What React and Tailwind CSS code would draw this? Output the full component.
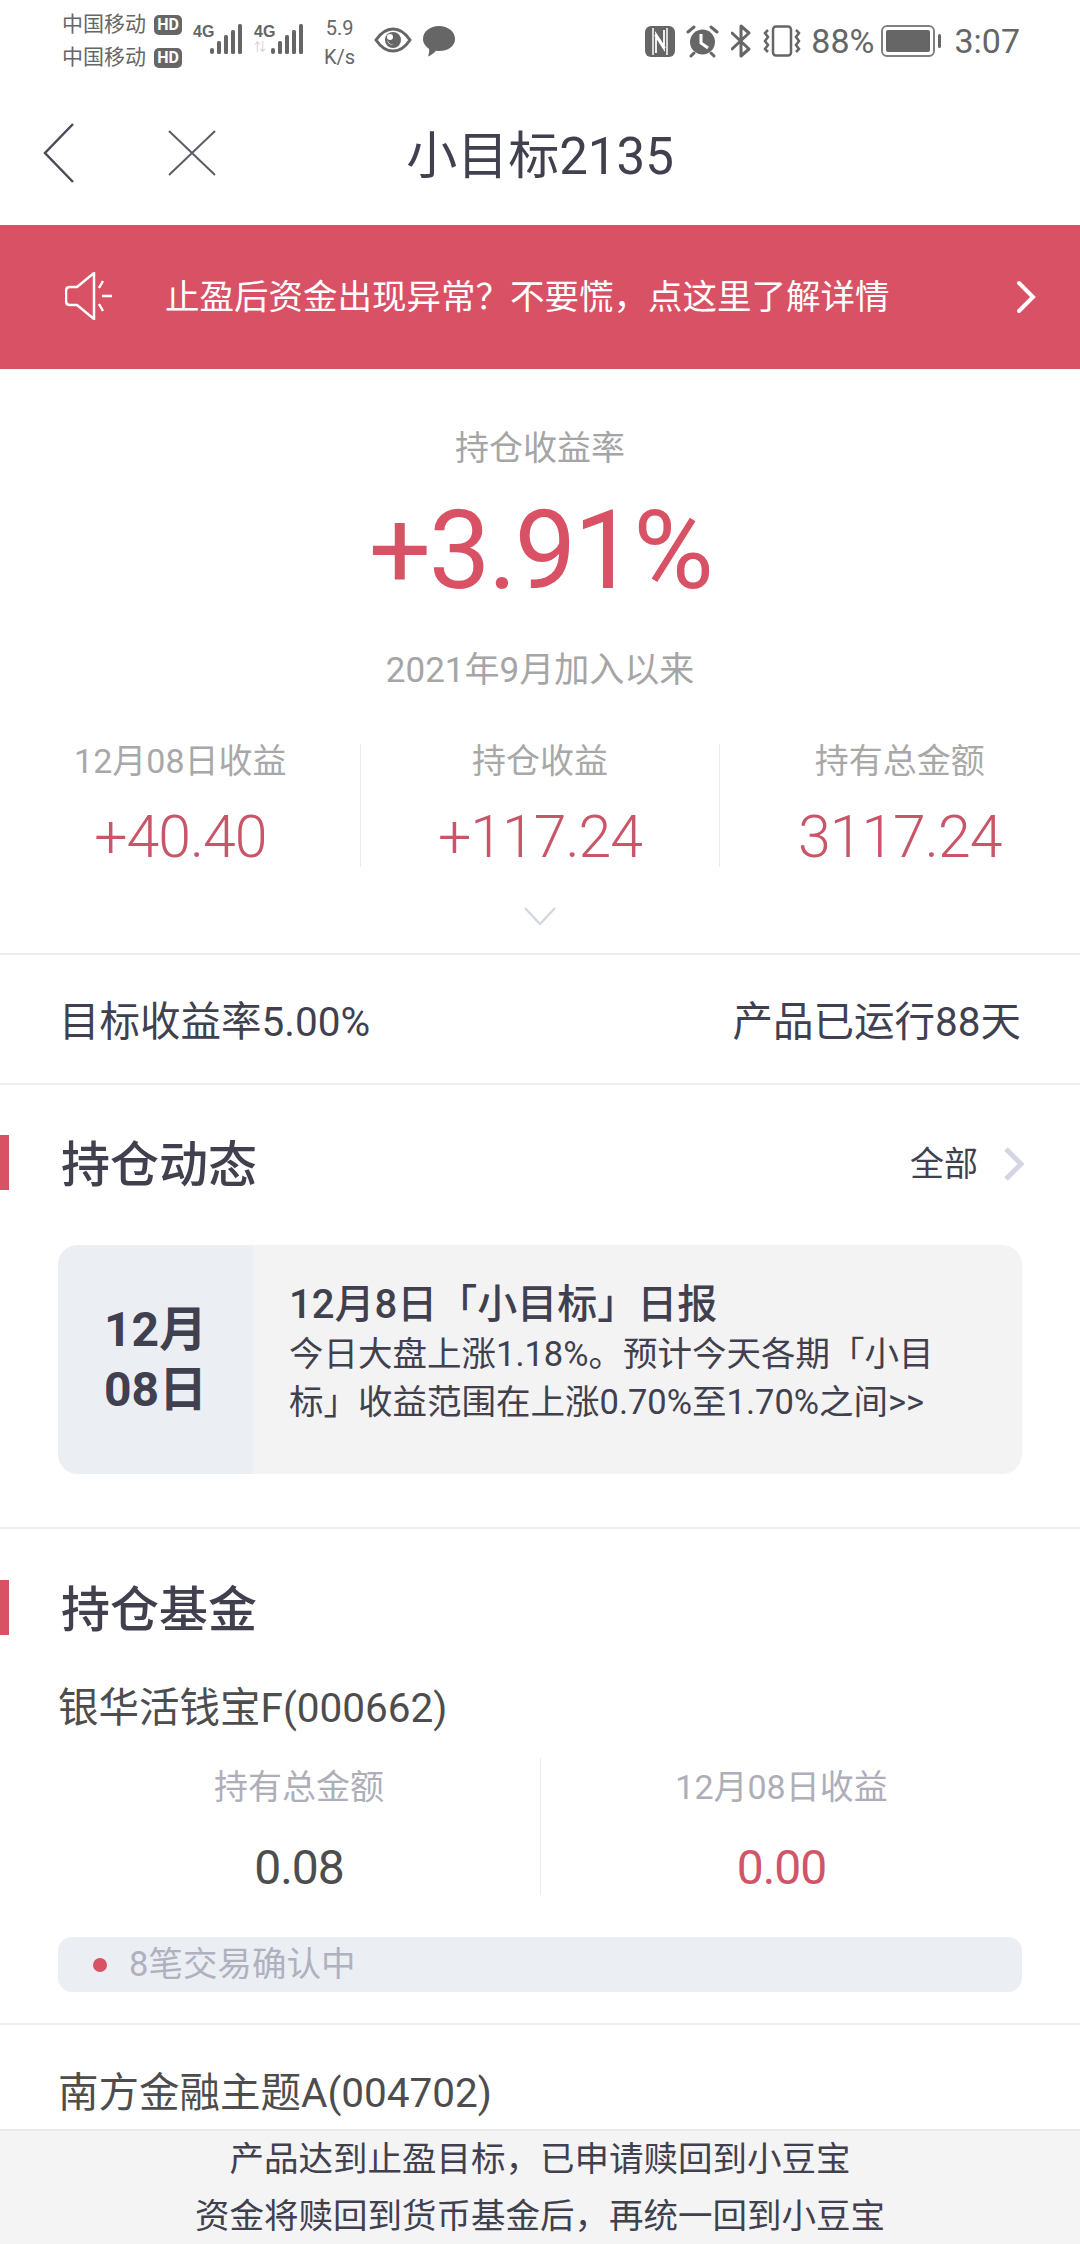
const DARK = 'text-[#40404f]';

// full-width punctuation, written as escapes so it stays exact
const Q = '\uFF1F';
const C = '\uFF0C';

function HdBadge() {
  return (
    <span className="flex h-[20px] w-[28px] items-center justify-center rounded-[5px] bg-[#666666] text-[16px] leading-none font-bold text-white">
      HD
    </span>
  );
}

function Signal({ arrows }) {
  return (
    <div className="flex h-[32px] w-[50px] items-start">
      <div className="flex w-[18px] flex-col">
        <span className="text-[16px] leading-[16px] font-bold text-[#666666] [font-family:'Liberation_Sans_Narrow','Liberation_Sans',sans-serif]">4G</span>
        {arrows && <span className="mt-[2px] text-[12px] leading-[12px] text-[#cccccc]">⇅</span>}
      </div>
      <svg width="33" height="31" viewBox="0 0 33 31" fill="#666666" className="ml-[-1px]">
        <rect x="0" y="24" width="4" height="6" rx="2" />
        <rect x="7" y="17" width="4" height="13" rx="1.5" />
        <rect x="14" y="11" width="4" height="19" rx="1.5" />
        <rect x="21" y="6" width="4" height="24" rx="1.5" />
        <rect x="28" y="0" width="4" height="30" rx="1.5" />
      </svg>
    </div>
  );
}

function StatusBar() {
  return (
    <div className="flex h-[85px] items-start justify-between pt-[8px] pr-[60px] pl-[62px] text-[#666666]">
      <div className="flex items-start">
        <div className="flex flex-col">
          <div className="flex h-[33px] items-center gap-[6px] text-[21px] leading-none"><span className="w-[86px] whitespace-nowrap">中国移动</span><HdBadge /></div>
          <div className="flex h-[33px] items-center gap-[6px] text-[21px] leading-none"><span className="w-[86px] whitespace-nowrap">中国移动</span><HdBadge /></div>
        </div>
        <div className="mt-[16px] ml-[11px] flex gap-[11px]">
          <Signal />
          <Signal arrows />
        </div>
        <div className="mt-[6px] ml-[20px] flex flex-col items-center text-[20px] leading-[29px]">
          <span>5.9</span>
          <span>K/s</span>
        </div>
        <svg width="38" height="26" viewBox="0 0 38 26" className="mt-[19px] ml-[19px]">
          <path d="M2 13 C8 4 14 2 19 2 C24 2 30 4 36 13 C30 22 24 24 19 24 C14 24 8 22 2 13 Z" fill="none" stroke="#666666" strokeWidth="3" />
          <circle cx="19" cy="13" r="8" fill="#666666" />
          <path d="M13 12 A6 6 0 0 0 20 18 A7 7 0 0 1 13 12 Z" fill="#ffffff" />
          <circle cx="16" cy="10" r="3" fill="#ffffff" />
        </svg>
        <svg width="32" height="31" viewBox="0 0 32 31" fill="#666666" className="mt-[18px] ml-[11px]">
          <path d="M16 0 C25 0 32 5.500 32 13 C32 20.500 25 25 16 25 C15 25 14 25 13 24.800 C11 27 8 29.500 5 30.500 C6 28 6.500 25 6 22.800 C2.500 20.500 0 17 0 13 C0 5.500 7 0 16 0 Z" />
        </svg>
      </div>
      <div className="mt-[16px] flex items-center">
        <svg width="30" height="31" viewBox="0 0 30 31" className="mr-[11px]">
          <rect x="0" y="0" width="30" height="31" rx="6" fill="#666666" />
          <path d="M8 2 V29 M22 2 V29" fill="none" stroke="#ffffff" strokeWidth="1.500" />
          <path d="M11 27 V8 L20 22 M19 4 V23 L10 9" fill="none" stroke="#ffffff" strokeWidth="1.800" />
        </svg>
        <svg width="33" height="33" viewBox="0 0 33 33" className="mr-[12px]">
          <circle cx="16.500" cy="17" r="12.500" fill="#666666" />
          <path d="M15 9 V18 L22 23" fill="none" stroke="#ffffff" strokeWidth="3" />
          <path d="M2 7 L8 2 M31 7 L25 2 M5 31 L8 28 M28 31 L25 28" fill="none" stroke="#666666" strokeWidth="3" strokeLinecap="round" />
        </svg>
        <svg width="21" height="34" viewBox="0 0 21 34" className="mr-[11px]">
          <path d="M1 9 L18 25 L10 32 V2 L18 9 L1 25" fill="none" stroke="#666666" strokeWidth="3" strokeLinejoin="round" strokeLinecap="round" />
        </svg>
        <svg width="38" height="32" viewBox="0 0 38 32" fill="none" stroke="#666666" strokeWidth="2.500" className="mr-[10px]">
          <rect x="10" y="1.500" width="18" height="29" rx="3" />
          <path d="M5 5 L2 8 L5 12 L2 16 L5 20 L2 24 L5 27 M33 5 L36 8 L33 12 L36 16 L33 20 L36 24 L33 27" />
        </svg>
        <span className="text-[34px] leading-none">88%</span>
        <div className="ml-[7px] flex items-center">
          <div className="h-[32px] w-[54px] rounded-[6px] border-[2.500px] border-[#808080] p-[3px]">
            <div className="h-full w-full rounded-[2px] bg-[#666666]" />
          </div>
          <div className="ml-[3px] h-[14px] w-[3px] rounded-full bg-[#666666]" />
        </div>
        <span className="ml-[13px] text-[34px] leading-none">3:07</span>
      </div>
    </div>
  );
}

function NavBar() {
  return (
    <div className="relative flex h-[140px] items-center justify-center">
      <svg width="32" height="60" viewBox="0 0 32 60" fill="none" stroke="#4a4a58" strokeWidth="2.500" className="absolute top-[38px] left-[43px]">
        <path d="M30 1 L2 30 L30 59" />
      </svg>
      <svg width="48" height="46" viewBox="0 0 48 46" fill="none" stroke="#5c5c68" strokeWidth="2" className="absolute top-[45px] left-[168px]">
        <path d="M1 1 L47 45 M47 1 L1 45" />
      </svg>
      <h1 className={`pt-[2px] text-[51px] leading-none ${DARK}`}>小目标2135</h1>
    </div>
  );
}

function Banner() {
  return (
    <div className="flex h-[144px] items-center bg-[#d95165] pr-[44px] pl-[65px] text-white">
      <svg width="48" height="48" viewBox="0 0 48 48" fill="none" stroke="#ffffff" strokeWidth="2.500" className="mb-[2px]">
        <path d="M29 1 V47 L12 33 H5 Q1 33 1 29 V19 Q1 15 5 15 H12 Z" />
        <path d="M38 9 L34 16 M37 24 H47 M34 32 L38 39" />
      </svg>
      <span className="ml-[52px] flex-1 text-[34.500px] leading-none whitespace-nowrap">{`止盈后资金出现异常${Q}不要慌${C}点这里了解详情`}</span>
      <svg width="20" height="34" viewBox="0 0 20 34" fill="none" stroke="#ffffff" strokeWidth="4" strokeLinecap="round">
        <path d="M3 3 L17 17 L3 31" />
      </svg>
    </div>
  );
}

function Stat({ label, value, last }) {
  return (
    <div className={`flex h-[123px] flex-1 flex-col items-center ${last ? '' : 'border-r border-[#ececec]'}`}>
      <div className="flex h-[34px] items-center text-[34px] leading-none text-[#a8a8a8]">{label}</div>
      <div className="mt-[28px] flex h-[60px] items-center text-[59px] leading-none font-light tracking-[-1px] text-[#c95568]">{value}</div>
    </div>
  );
}

function Hero() {
  return (
    <div className="flex flex-col items-center pt-[55px]">
      <div className="flex h-[48px] items-center text-[34px] leading-none text-[#a5a5a5]">持仓收益率</div>
      <div className="mt-[24px] flex h-[110px] items-center text-[110px] leading-none tracking-[-2.500px] text-[#d95165]">+3.91%</div>
      <div className="mt-[42px] flex h-[44px] items-center text-[35px] leading-none text-[#a5a5a5]">2021年9月加入以来</div>
      <div className="mt-[52px] flex w-full px-[1px]">
        <Stat label="12月08日收益" value="+40.40" />
        <Stat label="持仓收益" value="+117.24" />
        <Stat label="持有总金额" value="3117.24" last />
      </div>
      <svg width="32" height="18" viewBox="0 0 32 18" fill="none" stroke="#d5d8e3" strokeWidth="2.500" className="mt-[40px] mb-[28px]">
        <path d="M1 1 L16 17 L31 1" />
      </svg>
    </div>
  );
}

function SectionTitle({ title, children }) {
  return (
    <div className="flex h-[55px] items-center justify-between pr-[55px]">
      <div className="flex h-full items-center">
        <div className="h-full w-[9px] bg-[#d95165]" />
        <h2 className={`ml-[52px] pt-[6px] text-[49px] leading-none font-medium ${DARK}`}>{title}</h2>
      </div>
      {children}
    </div>
  );
}

function Fund({ name }) {
  return <div className="flex h-[60px] items-center px-[58px] text-[40.500px] leading-none text-[#4d4d4d]">{name}</div>;
}

export default function App() {
  return (
    <div className="flex h-[2244px] w-[1080px] flex-col overflow-hidden bg-white [font-family:Roboto,'Noto_Sans_CJK_SC',sans-serif]">
      <StatusBar />
      <NavBar />
      <Banner />
      <div className="border-b-2 border-[#eeeeee]">
        <Hero />
      </div>
      <div className={`flex h-[130px] items-center justify-between border-b-2 border-[#eeeeee] px-[59px] pt-[7px] text-[40.500px] leading-none ${DARK}`}>
        <span>目标收益率5.00%</span>
        <span>产品已运行88天</span>
      </div>

      <section className="border-b-2 border-[#eeeeee] pt-[50px] pb-[53px]">
        <SectionTitle title="持仓动态">
          <div className={`flex items-center pt-[3px] text-[34px] leading-none ${DARK}`}>
            全部
            <svg width="22" height="34" viewBox="0 0 22 34" fill="none" stroke="#d5d5e3" strokeWidth="5" className="ml-[25px]">
              <path d="M3 2 L18 17 L3 32" />
            </svg>
          </div>
        </SectionTitle>
        <div className="mx-[58px] mt-[55px] flex h-[229px] overflow-hidden rounded-[20px] bg-[#f3f3f4]">
          <div className={`flex w-[195px] flex-col items-center justify-center bg-[#ebeff4] pt-[1px] text-[48px] leading-[60px] font-bold ${DARK}`}>
            <span>12月</span>
            <span>08日</span>
          </div>
          <div className={`pt-[35px] pl-[36px] ${DARK}`}>
            <div className="text-[40px] leading-[50px] font-medium">12月8日「小目标」日报</div>
            <div className="text-[34.500px] leading-[48px] whitespace-nowrap">今日大盘上涨1.18%。预计今天各期「小目</div>
            <div className="text-[34.500px] leading-[48px] whitespace-nowrap">标」收益范围在上涨0.70%至1.70%之间&gt;&gt;</div>
          </div>
        </div>
      </section>

      <section className="border-b-2 border-[#eeeeee] pt-[51px] pb-[31px]">
        <SectionTitle title="持仓基金" />
        <div className="mt-[43px] mb-[-1px]">
          <Fund name="银华活钱宝F(000662)" />
        </div>
        <div className="mt-[21px] flex px-[58px]">
          <div className="flex h-[137px] w-[483px] flex-col items-center border-r border-[#ececec]">
            <div className="mt-[11px] flex h-[36px] items-center text-[34px] leading-none text-[#aeaeb9]">持有总金额</div>
            <div className="mt-[40px] flex h-[46px] items-center text-[48px] leading-none tracking-[-1px] text-[#4d4d4d]">0.08</div>
          </div>
          <div className="flex h-[137px] flex-1 flex-col items-center">
            <div className="mt-[11px] flex h-[36px] items-center text-[34px] leading-none text-[#aeaeb9]">12月08日收益</div>
            <div className="mt-[40px] flex h-[46px] items-center text-[48px] leading-none tracking-[-1px] text-[#d15568]">0.00</div>
          </div>
        </div>
        <div className="mx-[58px] mt-[42px] flex h-[55px] items-center rounded-[14px] bg-[#ebeff4] pl-[35px] text-[34.500px] leading-none text-[#b0b1bf]">
          <span className="h-[14px] w-[14px] rounded-full bg-[#d95165]" />
          <span className="ml-[22px]">8笔交易确认中</span>
        </div>
      </section>

      <div className="flex-1 pt-[38px]">
        <Fund name="南方金融主题A(004702)" />
      </div>

      <div className={`h-[115px] border-t-2 border-[#e9e9e9] bg-[#f4f4f5] text-center text-[34.500px] leading-[57px] ${DARK}`}>
        <div>{`产品达到止盈目标${C}已申请赎回到小豆宝`}</div>
        <div>{`资金将赎回到货币基金后${C}再统一回到小豆宝`}</div>
      </div>
    </div>
  );
}
